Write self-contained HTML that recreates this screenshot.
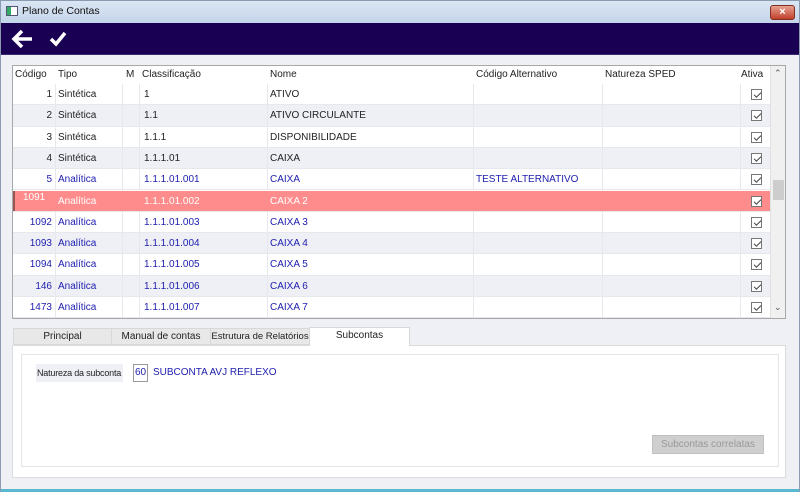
<!DOCTYPE html>
<html><head><meta charset="utf-8"><style>
*{box-sizing:border-box;margin:0;padding:0}
body{width:800px;height:492px;overflow:hidden;background:#eef0f6;font-family:"Liberation Sans",sans-serif;font-size:10px;color:#222;position:relative}
.a{position:absolute;white-space:nowrap}
#title{left:0;top:0;width:800px;height:23px;background:linear-gradient(#dbe6f3,#c4d5ea);border:1px solid #8a9ab0;border-bottom:none}
#bar{left:0;top:23px;width:800px;height:32px;background:#1a0052;border-bottom:1px solid #3a2a70}
#grid{left:12px;top:65px;width:774px;height:254px;background:#fff;border:1px solid #a8a8a8;overflow:hidden}
.row{position:absolute;left:0;width:757px;height:21.3px;border-bottom:1px solid #e6e8ee}
.g{background:#eef0f6}
.hl{background:#ff8c8c;color:#fff}
.hl .c{border-right-color:transparent}
.c{position:absolute;top:0;height:100%;line-height:21px;white-space:nowrap;border-right:1px solid #e6e8ee}
.blue{color:#2020b0}
.chk{position:absolute;left:738px;top:5px;width:11px;height:11px;border:1px solid #777;background:#fff}
.chk:after{content:"";position:absolute;left:2px;width:6px;height:3px;border-left:1.5px solid #444;border-bottom:1.5px solid #444;transform:rotate(-45deg);top:2px}
.tab{position:absolute;top:328px;height:17px;background:#e8e8e8;border:1px solid #d8d8d8;text-align:center;line-height:16px;white-space:nowrap;overflow:hidden}
</style></head><body>
<div id="title" class="a">
 <div class="a" style="left:5px;top:5px;width:12px;height:10px;border:1px solid #557;background:linear-gradient(90deg,#3a6 40%,#fff 40%)"></div>
 <div class="a" style="left:21px;top:4px;font-size:10.5px;color:#111">Plano de Contas</div>
 <div class="a" style="left:769px;top:4px;width:25px;height:15px;background:linear-gradient(#e8a090,#c0402c);border:1px solid #803020;border-radius:3px;color:#fff;text-align:center;font-size:11px;line-height:13px;font-weight:bold">×</div>
</div>
<div id="bar" class="a">
 <svg class="a" style="left:10px;top:6px" width="60" height="20"><path d="M4 10H22M12 2L4 10L12 18" stroke="#fff" stroke-width="3.5" fill="none"/><path d="M41 10L46 15L55 4" stroke="#fff" stroke-width="3.5" fill="none"/></svg>
</div>
<div id="grid" class="a">
 <div class="row" style="top:0;height:18px;border:none">
  <div class="c" style="left:2px;border:none;line-height:18px">Código</div>
  <div class="c" style="left:45px;border:none;line-height:18px">Tipo</div>
  <div class="c" style="left:113px;border:none;line-height:18px">M</div>
  <div class="c" style="left:129px;border:none;line-height:18px">Classificação</div>
  <div class="c" style="left:257px;border:none;line-height:18px">Nome</div>
  <div class="c" style="left:463px;border:none;line-height:18px">Código Alternativo</div>
  <div class="c" style="left:592px;border:none;line-height:18px">Natureza SPED</div>
  <div class="c" style="left:728px;border:none;line-height:18px">Ativa</div>
 </div>
 <div id="rows"></div>
 <div class="a" style="left:757px;top:0;width:16px;height:252px;background:#f0f0f0;border-left:1px solid #e0e0e0">
  <div class="a" style="left:3px;top:2px;font-size:9px;color:#555">⌃</div>
  <div class="a" style="left:2px;top:114px;width:11px;height:20px;background:#cdcdcd"></div>
  <div class="a" style="left:3px;top:236px;font-size:9px;color:#555">⌄</div>
 </div>
</div>
<script>
var d=[["1","Sintética","1","ATIVO","",0],["2","Sintética","1.1","ATIVO CIRCULANTE","",0],["3","Sintética","1.1.1","DISPONIBILIDADE","",0],["4","Sintética","1.1.1.01","CAIXA","",0],["5","Analítica","1.1.1.01.001","CAIXA","TESTE ALTERNATIVO",1],["1091","Analítica","1.1.1.01.002","CAIXA 2","",2],["1092","Analítica","1.1.1.01.003","CAIXA 3","",1],["1093","Analítica","1.1.1.01.004","CAIXA 4","",1],["1094","Analítica","1.1.1.01.005","CAIXA 5","",1],["146","Analítica","1.1.1.01.006","CAIXA 6","",1],["1473","Analítica","1.1.1.01.007","CAIXA 7","",1]];
var h="";d.forEach(function(r,i){var cl="row"+(r[5]==2?" hl":(i%2?" g":""))+(r[5]==1?" blue":"");
var cod=r[5]==2?'<div class="c" style="left:0;width:43px;padding-left:8px;line-height:14px;border-left:2px solid #955">'+r[0]+'</div>':'<div class="c" style="left:0;width:43px;text-align:right;padding-right:3px">'+r[0]+'</div>';
h+='<div class="'+cl+'" style="top:'+(18+i*21.3)+'px">'+cod+'<div class="c" style="left:43px;width:67px;padding-left:2px">'+r[1]+'</div><div class="c" style="left:110px;width:17px"></div><div class="c" style="left:127px;width:128px;padding-left:4px">'+r[2]+'</div><div class="c" style="left:255px;width:206px;padding-left:2px">'+r[3]+'</div><div class="c" style="left:461px;width:129px;padding-left:2px">'+r[4]+'</div><div class="c" style="left:590px;width:138px"></div><div class="c" style="left:728px;width:29px;border:none"></div><div class="chk"></div></div>';});
document.getElementById("rows").innerHTML=h;
</script>
<div class="a" style="left:12px;top:345px;width:774px;height:133px;background:#fff;border:1px solid #dcdcdc"></div>
<div class="tab" style="left:13px;width:99px">Principal</div>
<div class="tab" style="left:111px;width:100px">Manual de contas</div>
<div class="tab" style="left:210px;width:100px;font-size:9.5px">Estrutura de Relatórios</div>
<div class="tab" style="left:309px;top:327px;width:101px;height:19px;background:#fff;border-bottom:none;line-height:16px">Subcontas</div>
<div class="a" style="left:21px;top:354px;width:758px;height:113px;border:1px solid #e4e4e4;background:#fff"></div>
<div class="a" style="left:36px;top:364px;width:87px;height:18px;background:#eef0f6;line-height:18px;padding-left:1px;font-size:9px;letter-spacing:-0.2px;overflow:hidden">Natureza da subconta</div>
<div class="a" style="left:133px;top:364px;width:15px;height:18px;border:1px solid #999;line-height:16px;text-align:center;color:#2020b0">60</div>
<div class="a" style="left:153px;top:364px;line-height:18px;color:#2020b0">SUBCONTA AVJ REFLEXO</div>
<div class="a" style="left:652px;top:435px;width:112px;height:19px;background:#cfcfcf;border:1px solid #c0c0c0;color:#999;text-align:center;line-height:17px">Subcontas correlatas</div>
<div class="a" style="left:0;top:489px;width:800px;height:3px;background:#5ab8d0"></div>
<div class="a" style="left:0;top:23px;width:1px;height:469px;background:#8a9ab0"></div>
<div class="a" style="left:799px;top:23px;width:1px;height:469px;background:#8a9ab0"></div>
</body></html>
